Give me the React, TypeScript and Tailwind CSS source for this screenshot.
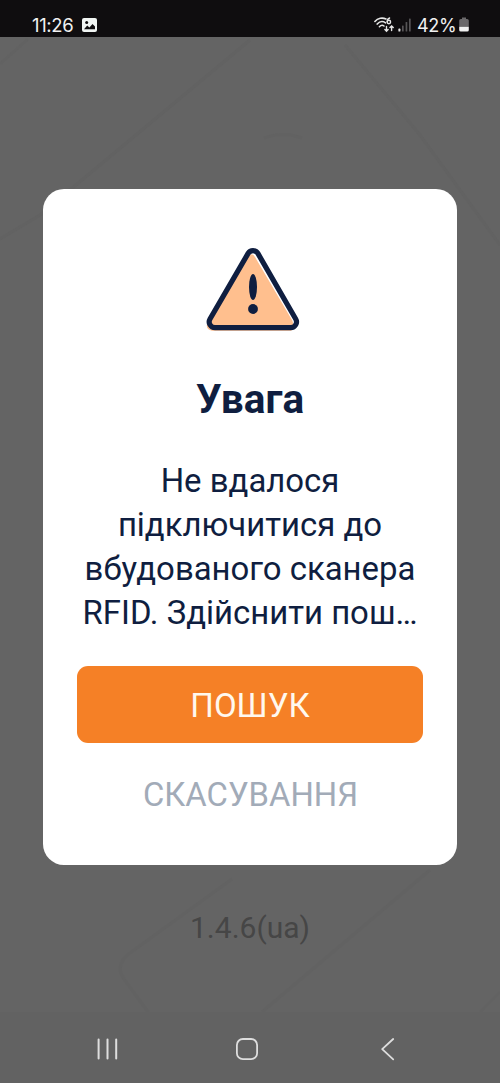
import type { ReactNode } from 'react';

const MESSAGE = ['Не вдалося', 'підключитися до', 'вбудованого сканера', 'RFID. Здійснити пош…'];

function StatusBar() {
  return (
    <header className="flex h-[37px] shrink-0 items-start justify-between bg-[#0f0d0f] pt-[13px] pr-[31px] pl-[32px] text-[#f1f1f1]">
      <div className="flex items-start">
        <span className="w-[50px] font-[Inter] text-[18.500px] leading-6 tracking-[-0.350px] whitespace-nowrap">11:26</span>
        <svg className="mt-[5px] h-[14px] w-[15px]" viewBox="0 0 15 14">
          <rect width="15" height="14" rx="2" fill="#f1f5f3" />
          <circle cx="4.7" cy="4.6" r="1.5" fill="#0f0d0f" />
          <path d="M2 11.2 5.2 7.6 7.4 9.6 10.5 6 13 8.6V11.2Z" fill="#0f0d0f" />
        </svg>
      </div>

      <div className="flex items-start">
        {/* Wi-Fi 6 with traffic arrows */}
        <svg className="mt-[4px] h-[17px] w-[20px]" viewBox="0 0 20 17" fill="none" stroke="#e6e6e6" strokeWidth="1.6" strokeLinecap="round">
          <path d="M0.9 4.4C3.800 1 8.500 0.300 12 2" />
          <path d="M3.200 7.100C5.600 4.300 9 4 11.600 5.800" />
          <path d="M5.400 9.700C7 8 8.800 8 10 9" />
          <path d="M15.600 1C13.900 1.600 13.200 3.200 13.200 4.700" strokeWidth="1.4" />
          <circle cx="14.900" cy="5" r="1.700" strokeWidth="1.4" />
          <path d="M12.500 9.500v4.500M10.900 12.500l1.600 1.700 1.600-1.700M17.600 13.500V9M16 10.600l1.600-1.700 1.600 1.700" strokeWidth="1.4" />
        </svg>
        <svg className="mt-[5px] ml-[4px] h-[14px] w-[14px]" viewBox="0 0 14 14">
          <rect x="0.4" y="10.6" width="2" height="3" rx="0.6" fill="#e6e6e6" />
          <rect x="4" y="7.4" width="1.7" height="6.2" rx="0.6" fill="#565456" />
          <rect x="7.6" y="4" width="1.7" height="9.6" rx="0.6" fill="#565456" />
          <rect x="11" y="0.6" width="1.7" height="13" rx="0.6" fill="#565456" />
        </svg>
        <span className="ml-[5px] w-[42px] pt-px font-[Inter] text-[18px] leading-6 tracking-[-0.300px] whitespace-nowrap">42%</span>
        <svg className="mt-[4px] h-[15px] w-[10px]" viewBox="0 0 10 15">
          <path d="M3 0.5h4v1.4h1.2Q9.8 1.9 9.8 3.5V9.8H0.2V3.5Q0.2 1.9 1.8 1.9H3Z" fill="#6a686a" />
          <path d="M0.2 9.8H9.8V12.9Q9.8 14.5 8.2 14.5H1.8Q0.2 14.5 0.2 12.9Z" fill="#f1f1f1" />
        </svg>
      </div>
    </header>
  );
}

// Barely visible diagonal shapes behind the dialog
function Backdrop() {
  return (
    <svg className="pointer-events-none absolute inset-0 h-full w-full" viewBox="0 0 500 975" fill="none" stroke="#626262" strokeWidth="3">
      <path d="M0 27 28 2" />
      <path d="M0 202 40 178 250 3" />
      <path d="M345 8 420 98 500 208" />
      <path d="M264 101Q283 94 302 101" />
      <path d="M430 833 262 975" />
      <path d="M232 842 130 916Q114 928 124 942L148 975" />
      <path d="M500 955 480 975" />
    </svg>
  );
}

function WarningIcon() {
  return (
    <svg className="h-[86px] w-[96px]" viewBox="0 0 96 86">
      <path d="M43.500 9.500Q47 4.500 50.300 10.500L87.300 73.500Q91 83.800 84 83.800H7Q-0.500 82.500 2.800 74Z" fill="#ffbf8e" />
      <path
        d="M43.100 6.400A5.700 5.700 0 0 1 52.900 6.400L90.700 72A5.800 5.800 0 0 1 85.700 80.700H10A5.800 5.800 0 0 1 5 72Z"
        fill="none"
        stroke="#0f1e40"
        strokeWidth="5.200"
      />
      <ellipse cx="48" cy="40" rx="4" ry="13" fill="#0f1e40" />
      <circle cx="48" cy="62" r="4.900" fill="#0f1e40" />
    </svg>
  );
}

function Dialog({ children }: { children: ReactNode }) {
  return (
    <section role="dialog" className="relative mx-auto mt-[152px] flex h-[675.500px] w-[413.500px] shrink-0 flex-col items-center rounded-[21px] bg-white">
      {children}
    </section>
  );
}

function NavBar() {
  return (
    <nav className="flex h-[71px] shrink-0 items-start bg-[#626262] pt-[25px] pl-[96px]">
      <svg className="h-[24px] w-[23px]" viewBox="0 0 23 24" fill="none" stroke="#dedede" strokeWidth="2" strokeLinecap="round">
        <path d="M2.600 2.500V21.500M11.500 2.500V21.500M20.200 2.500V21.500" />
      </svg>
      <svg className="ml-[116px] h-[24px] w-[24px]" viewBox="0 0 24 24" fill="none" stroke="#dedede" strokeWidth="1.800">
        <rect x="1.900" y="2" width="20.200" height="20.200" rx="6" />
      </svg>
      <svg className="ml-[121px] h-[24px] w-[15px]" viewBox="0 0 15 24" fill="none" stroke="#dedede" strokeWidth="1.800" strokeLinecap="round" strokeLinejoin="round">
        <path d="M13.200 2 2.200 12.200 13.200 22.400" />
      </svg>
    </nav>
  );
}

export default function App() {
  return (
    <div className="flex h-[1083px] w-[500px] flex-col overflow-hidden bg-[#646464] font-[Roboto,sans-serif]">
      <StatusBar />
      <main className="relative flex flex-1 flex-col">
        <Backdrop />
        <Dialog>
          <div className="mt-[58px] ml-[6px]">
            <WarningIcon />
          </div>
          <h1 className="mt-[42px] text-[40.500px] leading-[48px] font-bold text-[#0f1e40]">Увага</h1>
          <p className="mt-[36px] text-center text-[32.900px] leading-[44px] text-[#0f1e40]">
            {MESSAGE.map((line) => (
              <span key={line} className="block whitespace-nowrap">
                {line}
              </span>
            ))}
          </p>
          <button className="mt-[31px] h-[77px] w-[346.500px] rounded-[11px] bg-[#f58026] pt-[2px] text-[33px] text-[#fff8ee]">ПОШУК</button>
          <button className="mt-[26px] ml-px h-[54px] text-[32.800px] text-[#a2abb8]">СКАСУВАННЯ</button>
        </Dialog>
        <p className="relative mt-[43px] text-center text-[30px] leading-[40px] text-[#464646]">1.4.6(ua)</p>
      </main>
      <NavBar />
    </div>
  );
}
